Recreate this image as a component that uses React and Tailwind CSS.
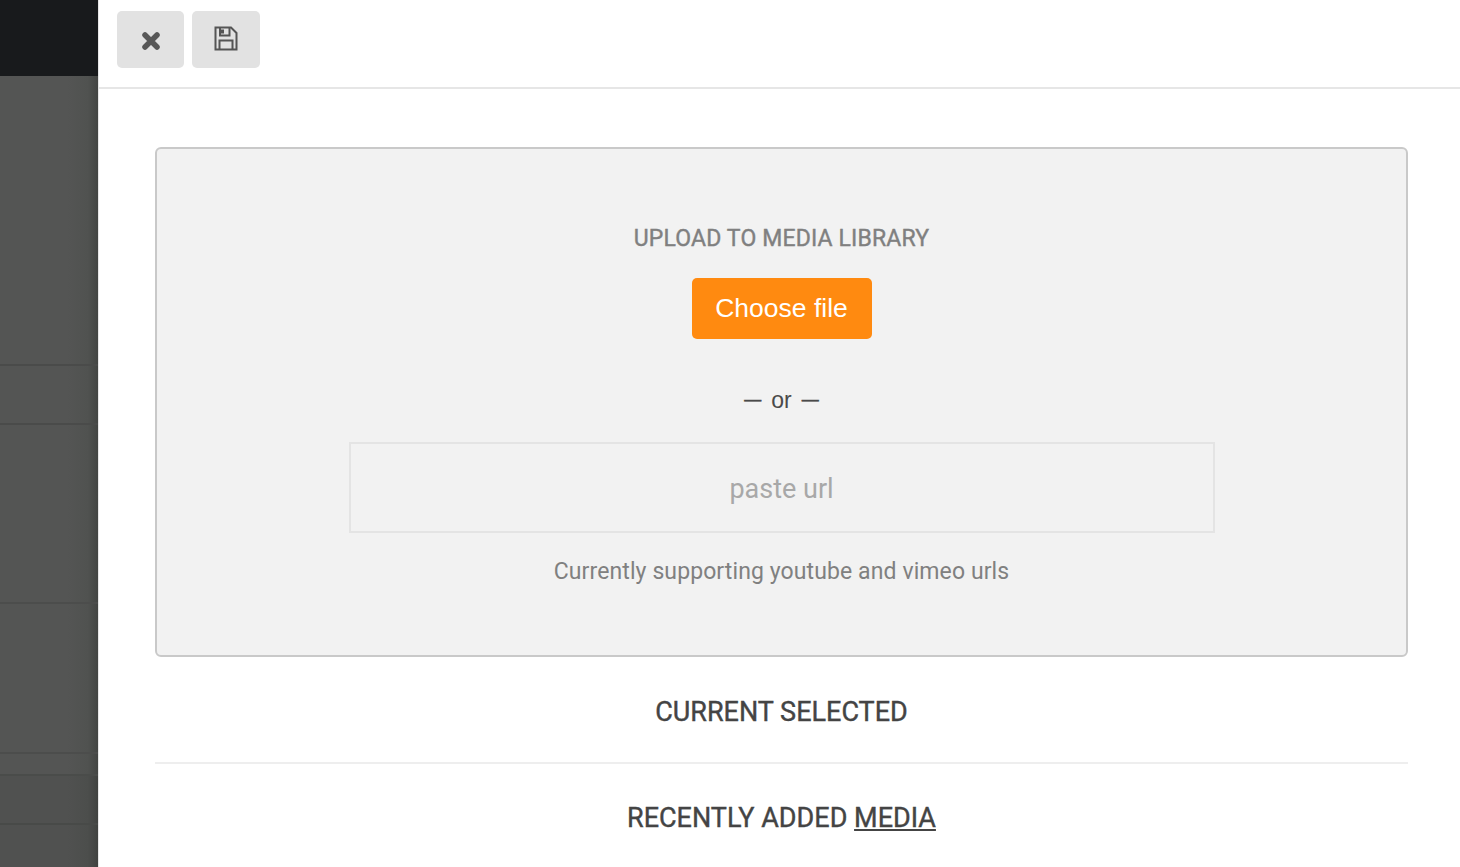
import React from 'react';

const sidebarRows = [
  { height: 'h-[290px]', bg: 'bg-transparent', line: 'border-[#4a4b4a]' },
  { height: 'h-[59px]', bg: 'bg-transparent', line: 'border-[#4a4b4a]' },
  { height: 'h-[179px]', bg: 'bg-transparent', line: 'border-[#4c4d4c]' },
  { height: 'h-[150px]', bg: 'bg-transparent', line: 'border-[#4c4d4c]' },
  { height: 'h-[22px]', bg: 'bg-transparent', line: 'border-[#4a4c4a]' },
  { height: 'h-[49px]', bg: 'bg-[#0000000a]', line: 'border-[#484a48]' },
  { height: 'h-[42px]', bg: 'bg-[#0000000a]', line: 'border-transparent' },
];

function Sidebar() {
  return (
    <aside className="relative w-[98px] shrink-0 h-full bg-[#545554] overflow-hidden">
      {/* shadow the modal throws on the page behind it */}
      <div className="absolute top-[76px] bottom-0 right-0 w-[34px] bg-gradient-to-r from-[#54555400] from-10% via-[#505250] via-70% to-[#434543]" />
      <div className="relative h-[76px] bg-[#181a1c]" />
      {sidebarRows.map((row, i) => (
        <div key={i} className={`relative ${row.height} ${row.bg} border-b-2 ${row.line}`} />
      ))}
    </aside>
  );
}

function ToolButton({ className, children }) {
  return (
    <button className={`h-[57px] rounded-[5px] bg-[#e2e2e2] flex items-center justify-center ${className}`}>
      {children}
    </button>
  );
}

function App() {
  return (
    <div className="flex w-[1460px] h-[867px] overflow-hidden bg-white font-['Roboto',sans-serif]">
      <Sidebar />
      <main className="flex-1 min-w-0 border-l border-[#e6e6e6]">
        <header className="h-[89px] border-b-2 border-[#e6e6e6] pl-[18px] pt-[11px] flex gap-2 items-start">
          <ToolButton className="w-[67px]">
            <svg width="22" height="22" viewBox="0 0 22 22" className="mt-[2px]">
              <path d="M5 5 L17 17 M17 5 L5 17" stroke="#585858" strokeWidth="5.5" strokeLinecap="round" fill="none" />
            </svg>
          </ToolButton>
          <ToolButton className="w-[68px]">
            <svg width="24" height="25" viewBox="0 0 24 25" fill="none" stroke="#555555" strokeWidth="2" className="mb-[3px]">
              <path d="M1.5 1.5 H17 L22.5 7 V23.5 H1.5 Z" />
              <path d="M6 1.5 V9.5 H15.5 V1.5" />
              <path d="M5.5 23.5 V14.5 H18.5 V23.5" />
              <path d="M8.5 3.5 V7.5" strokeWidth="3" />
            </svg>
          </ToolButton>
        </header>

        <div className="pl-[56px] pr-[52px] pt-[58px]">
          <section className="h-[510px] rounded-[6px] border-2 border-[#c9c9c9] bg-[#f2f2f2] flex flex-col items-center pt-[76px]">
            <h2 className="h-[28px] text-[23px] leading-[28px] tracking-[0.15px] font-normal [-webkit-text-stroke:0.4px_#808080] text-[#808080]">UPLOAD TO MEDIA LIBRARY</h2>
            <button className="mt-[25px] w-[180px] h-[61px] rounded-[5px] bg-[#ff8a10] text-white text-[26.5px] font-['Liberation_Sans',sans-serif]">
              Choose file
            </button>
            <p className="mt-[47px] h-[28px] flex items-center gap-[10px] text-[#4a4a4a] font-['Liberation_Sans',sans-serif]">
              <span className="text-[17px] [-webkit-text-stroke:0.5px_#4a4a4a]">—</span>
              <span className="text-[23px] leading-[28px]">or</span>
              <span className="text-[17px] [-webkit-text-stroke:0.5px_#4a4a4a]">—</span>
            </p>
            <input
              type="text"
              placeholder="paste url"
              className="mt-[28px] w-[866px] h-[91px] border-2 border-[#e4e4e4] bg-transparent pt-[2px] text-center text-[27px] outline-none placeholder:text-[#a8a8a8]"
            />
            <p className="mt-[25px] text-[23px] leading-[28px] tracking-[0.1px] text-[#808080]">Currently supporting youtube and vimeo urls</p>
          </section>

          <h3 className="mt-[39px] text-center text-[27px] leading-[32px] font-normal [-webkit-text-stroke:0.4px_#444444] text-[#444444]">CURRENT SELECTED</h3>
          <hr className="mt-[34px] border-t-2 border-[#eeeeee]" />
          <h3 className="mt-[38px] text-center text-[27px] leading-[32px] font-normal [-webkit-text-stroke:0.4px_#444444] text-[#444444]">
            RECENTLY ADDED <span className="underline">MEDIA</span>
          </h3>
        </div>
      </main>
    </div>
  );
}

export default App;
